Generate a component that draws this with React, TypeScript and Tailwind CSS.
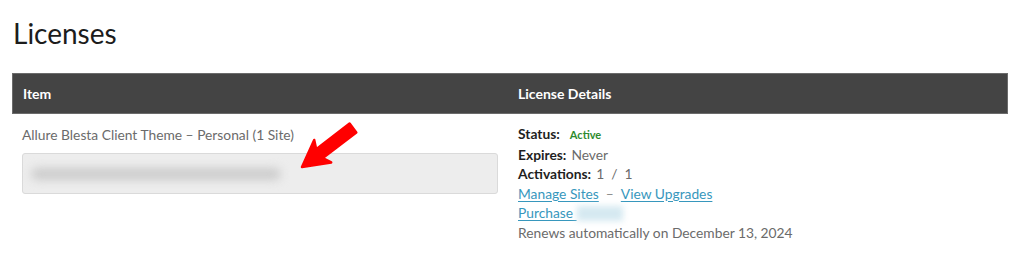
const Arrow = () => (
  <svg
    className="absolute left-[290px] top-[115px]"
    width="75"
    height="60"
    viewBox="0 0 75 60"
  >
    <path
      d="M12 52 L24.2 25 L26.2 34.2 L59.6 8.6 L66.3 17.4 L32.8 43 L41.2 47.4 Z"
      fill="#f00"
      stroke="#f00"
      strokeWidth="2.5"
      strokeLinejoin="round"
    />
  </svg>
);

const App = () => {
  return (
    <div className="relative w-[1024px] h-[263px] bg-white font-['Lato',sans-serif]">
      <div className="px-3 pt-[16px]">
        <h1 className="text-[28px] leading-[35px] text-[#1c1c1c] pl-[1px]">
          Licenses
        </h1>
        <div className="mt-[22px] w-[996px]">
          <div className="flex h-[41px] items-center bg-[#444444] border border-[#6b6b6b] text-white text-[14px] font-bold">
            <div className="w-[496px] pl-[10px]">Item</div>
            <div className="pl-[9px]">License Details</div>
          </div>
          <div className="flex text-[13.8px]">
            <div className="w-[496px] pl-[10px] pt-[11px]">
              <p className="text-[#6b6b6b] leading-[20px]">
                Allure Blesta Client Theme – Personal (1 Site)
              </p>
              <div className="mt-[8px] h-[41px] w-[476px] rounded-[3px] border border-[#dadada] bg-[#ededed] flex items-center px-[8px]">
                <div className="h-[12px] w-[250px] rounded-full bg-[#cccccc] blur-[5px]" />
              </div>
            </div>
            <div className="pl-[10px] pt-[10px] leading-[19.6px] text-[#6b6b6b]">
              <p>
                <span className="font-bold text-[#1f1f1f]">Status:</span>
                <span className="ml-[10px] text-[11px] font-bold text-[#2e8b2e]">Active</span>
              </p>
              <p>
                <span className="font-bold text-[#1f1f1f]">Expires:</span>
                <span className="ml-[5px]">Never</span>
              </p>
              <p>
                <span className="font-bold text-[#1f1f1f]">Activations:</span>
                <span className="ml-[5px]">1 &nbsp;/ &nbsp;1</span>
              </p>
              <p>
                <a href="#" className="text-[#3797bd] underline underline-offset-2">
                  Manage Sites
                </a>
                <span className="mx-[7px] text-[#888]">–</span>
                <a href="#" className="text-[#3797bd] underline underline-offset-2">
                  View Upgrades
                </a>
              </p>
              <p className="flex items-center">
                <a href="#" className="text-[#3797bd] underline underline-offset-2">
                  Purchase&nbsp;
                </a>
                <span className="inline-block h-[15px] w-[46px] bg-[#d5e9f1] blur-[3px]" />
              </p>
              <p>Renews automatically on December 13, 2024</p>
            </div>
          </div>
        </div>
      </div>
      <Arrow />
    </div>
  );
};

export default App;
